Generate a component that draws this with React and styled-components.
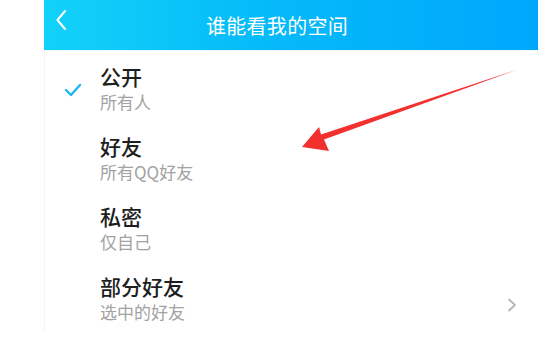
import React from "react";
import styled, { createGlobalStyle } from "styled-components";

const GlobalStyle = createGlobalStyle`
  html, body {
    margin: 0;
    padding: 0;
    background: #fff;
    font-family: "Noto Sans CJK SC", "Noto Sans", sans-serif;
  }
`;

const Page = styled.div`
  position: relative;
  width: 550px;
  height: 337px;
  overflow: hidden;
  background: #fff;
`;

const Screen = styled.div`
  margin-left: 44px;
  width: 494px;
  display: flex;
  flex-direction: column;
`;

const Header = styled.div`
  height: 50px;
  display: flex;
  align-items: center;
  justify-content: center;
  position: relative;
  box-sizing: border-box;
  padding-right: 28px;
  background: linear-gradient(90deg, #12d2f8 0%, #05baf9 45%, #00a7fc 100%);
  color: #fff;
  font-size: 20px;
  letter-spacing: 0.3px;
`;

const BackButton = styled.span`
  position: absolute;
  left: 10px;
  top: 9px;
  display: flex;
`;

const List = styled.div`
  display: flex;
  flex-direction: column;
  border-left: 1px solid #f4f4f4;
  border-top: 1px solid #eefbfe;
`;

const Row = styled.div`
  display: flex;
  align-items: flex-start;
  height: 70px;
  box-sizing: border-box;
  padding: 12px 21px 8px 0;
`;

const CheckCol = styled.div`
  width: 55px;
  height: 100%;
  display: flex;
  justify-content: center;
  padding-top: 20px;
  box-sizing: border-box;
`;

const Texts = styled.div`
  flex: 1;
  display: flex;
  flex-direction: column;
`;

const Title = styled.div`
  font-size: 21px;
  line-height: 26px;
  font-weight: 500;
  color: #1e1e1e;
`;

const Sub = styled.div`
  margin-top: 3px;
  font-size: 17px;
  line-height: 20px;
  color: #a2a2a2;
`;

const Chevron = styled.div`
  align-self: center;
  margin-top: 14px;
  display: flex;
`;

const Arrow = styled.svg`
  position: absolute;
  left: 0;
  top: 0;
  pointer-events: none;
`;

const items = [
  { title: "公开", sub: "所有人", checked: true },
  { title: "好友", sub: "所有QQ好友" },
  { title: "私密", sub: "仅自己" },
  { title: "部分好友", sub: "选中的好友", more: true },
];

export default function App() {
  return (
    <Page>
      <GlobalStyle />
      <Screen>
        <Header>
          <BackButton>
            <svg width="14" height="22" viewBox="0 0 14 22">
              <path d="M11 2 L3.5 11 L11 20" fill="none" stroke="#fff" strokeWidth="2" strokeLinecap="round" strokeLinejoin="round" />
            </svg>
          </BackButton>
          谁能看我的空间
        </Header>
        <List>
          {items.map((it) => (
            <Row key={it.title}>
              <CheckCol>
                {it.checked && (
                  <svg width="18" height="14" viewBox="0 0 18 14">
                    <path d="M2 7 L7 12 L16 2" fill="none" stroke="#1cb7f0" strokeWidth="2.4" strokeLinecap="round" strokeLinejoin="round" />
                  </svg>
                )}
              </CheckCol>
              <Texts>
                <Title>{it.title}</Title>
                <Sub>{it.sub}</Sub>
              </Texts>
              {it.more && (
                <Chevron>
                  <svg width="10" height="14" viewBox="0 0 10 14">
                    <path d="M2 1.5 L8 7 L2 12.5" fill="none" stroke="#b5b5b5" strokeWidth="1.8" strokeLinecap="round" strokeLinejoin="round" />
                  </svg>
                </Chevron>
              )}
            </Row>
          ))}
        </List>
      </Screen>
      <Arrow width="550" height="337" viewBox="0 0 550 337">
        <path
          d="M519 69 L324 139.5 L329 151 L302 147 L319 127 L321 134.5 Z"
          fill="#f2302e"
        />
      </Arrow>
    </Page>
  );
}
